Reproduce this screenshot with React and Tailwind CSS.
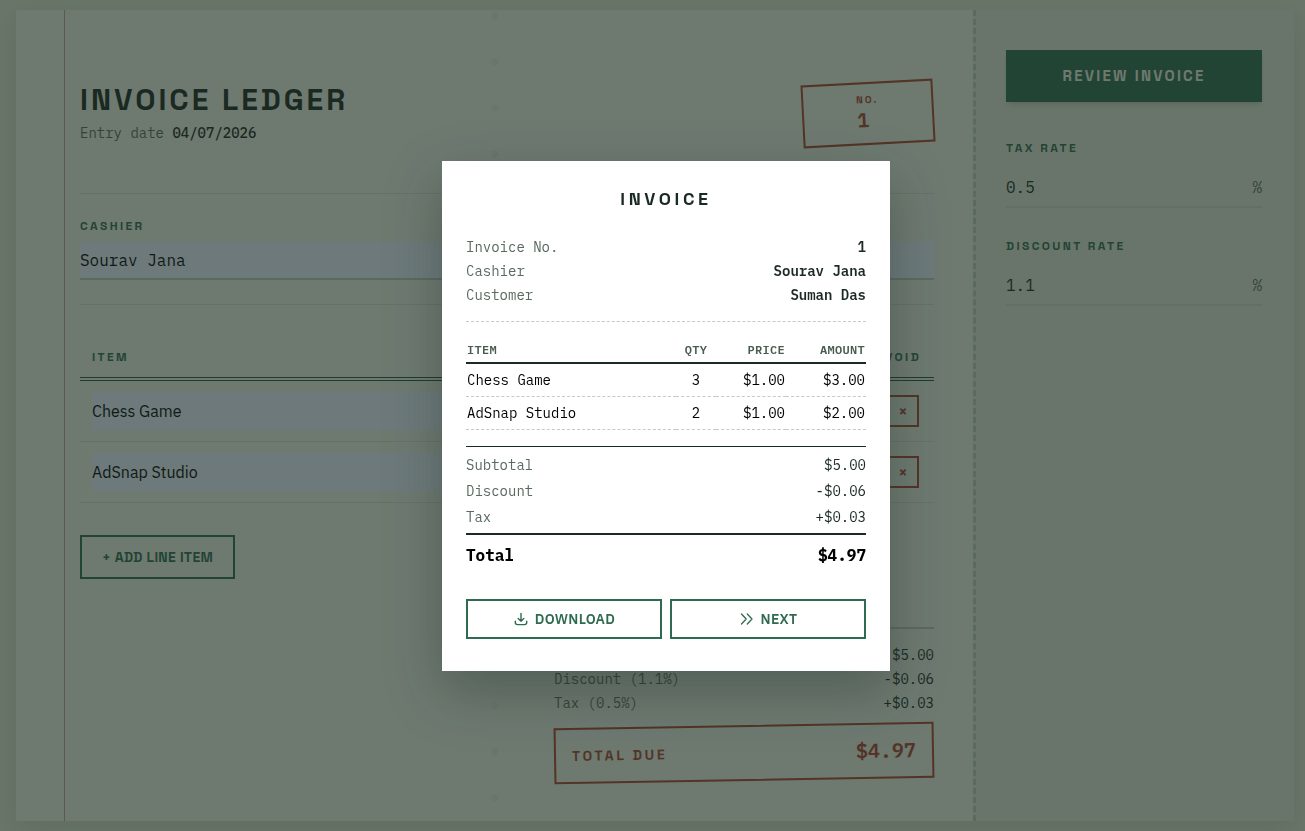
import { useState } from "react";

const MONO = "font-['IBM_Plex_Mono','Liberation_Mono',monospace]";
const HEAD = "font-['Space_Grotesk','Liberation_Sans',sans-serif]";

const ITEMS = [
  { id: 1, name: "Chess Game", qty: 3, price: 1 },
  { id: 2, name: "AdSnap Studio", qty: 2, price: 1 },
];

const money = (n) => `$${n.toFixed(2)}`;

function FieldLabel({ htmlFor, children }) {
  return (
    <label
      htmlFor={htmlFor}
      className="block font-['Space_Grotesk','Liberation_Sans',sans-serif] text-xs leading-4 font-semibold tracking-[0.2em] text-[#2f6b50] uppercase"
    >
      {children}
    </label>
  );
}

function PartyField({ id, label, defaultValue }) {
  return (
    <div>
      <FieldLabel htmlFor={id}>{label}</FieldLabel>
      <input
        id={id}
        defaultValue={defaultValue}
        className={`mt-2 block h-[38px] w-full border-b-2 border-[#bccabc] bg-[#e8f0fe] text-base text-black outline-none ${MONO}`}
      />
    </div>
  );
}

function RateField({ id, label, defaultValue }) {
  return (
    <div>
      <FieldLabel htmlFor={id}>{label}</FieldLabel>
      <div className={`mt-3 flex h-10 items-center border-b-2 border-[#ced7ca] text-base ${MONO}`}>
        <input
          id={id}
          defaultValue={defaultValue}
          className="w-full min-w-0 bg-transparent text-[#1b2a22] outline-none"
        />
        <span className="text-[#5a6a5f]">%</span>
      </div>
    </div>
  );
}

function Ledger() {
  const th =
    "border-b-4 border-double border-[#235541] pt-0 pb-3 text-xs leading-4 font-semibold tracking-[0.2em] text-[#2f6b50] uppercase";
  const td = "h-[61px] border-b border-[#d3ddd0] py-0";
  return (
    <main className="relative flex min-w-0 flex-1 bg-[#ebf1e7]">
      <div className="w-[49px] shrink-0 border-r border-[#c99d94]" />
      <div className="absolute inset-y-0 left-1/2 w-2 -translate-x-1/2 bg-[radial-gradient(circle_at_4px_6px,#e0e8db_3px,transparent_4px)] bg-[length:8px_46px]" />
      <div className="relative flex min-w-0 flex-1 flex-col pt-[69px] pr-[39px] pb-10 pl-[15px]">
        <header className="flex items-start justify-between border-b border-[#d3ddd0] pb-12">
          <div>
            <h1 className={`text-[30px] leading-[42px] font-bold tracking-[0.1em] text-[#1b2a22] ${HEAD}`}>
              INVOICE LEDGER
            </h1>
            <p className={`text-sm leading-6 text-[#5a6a5f] ${MONO}`}>
              Entry date <span className="font-medium text-[#1b2a22]">04/07/2026</span>
            </p>
          </div>
          <div className="mt-[3px] flex h-[63px] w-[132px] -rotate-3 items-center justify-center border-2 border-[#a8442f] pb-1 text-[#a8442f]">
            <div className="flex flex-col">
              <span className={`text-[10px] leading-4 font-semibold tracking-[0.2em] ${HEAD}`}>NO.</span>
              <span className={`text-xl leading-6 font-semibold ${MONO}`}>1</span>
            </div>
          </div>
        </header>

        <section className="grid grid-cols-2 gap-8 border-b border-[#d3ddd0] pt-6 pb-6">
          <PartyField id="cashier" label="Cashier" defaultValue="Sourav Jana" />
          <PartyField id="customer" label="Customer" defaultValue="Suman Das" />
        </section>

        <table className="mt-11 w-full table-fixed border-separate border-spacing-0">
          <thead className={HEAD}>
            <tr>
              <th className={`px-3 text-left ${th}`}>Item</th>
              <th className={`w-20 px-3 text-left ${th}`}>Qty</th>
              <th className={`w-[284px] px-3 text-left ${th}`}>Price</th>
              <th className={`w-[62px] px-0 text-center ${th}`}>Void</th>
            </tr>
          </thead>
          <tbody>
            {ITEMS.map((item) => (
              <tr key={item.id}>
                <td className={`px-3 ${td}`}>
                  <input
                    aria-label="Item name"
                    defaultValue={item.name}
                    className="block h-[38px] w-full bg-[#e8f0fe] font-['IBM_Plex_Sans',Roboto,sans-serif] text-base text-black outline-none"
                  />
                </td>
                <td className={`px-3 ${td}`}>
                  <input aria-label="Quantity" defaultValue={item.qty} className={`w-full outline-none ${MONO}`} />
                </td>
                <td className={`px-3 ${td}`}>
                  <input aria-label="Price" defaultValue={item.price.toFixed(2)} className={`w-full outline-none ${MONO}`} />
                </td>
                <td className={`text-center ${td}`}>
                  <button
                    type="button"
                    aria-label="Void item"
                    className={`inline-flex size-8 items-center justify-center border-2 border-[#a8442f] align-middle text-sm font-bold text-[#a8442f] ${MONO}`}
                  >
                    ×
                  </button>
                </td>
              </tr>
            ))}
          </tbody>
        </table>

        <button
          type="button"
          className={`mt-8 h-11 self-start border-2 border-[#2f6b50] px-5 text-sm font-semibold tracking-[0.02em] text-[#2f6b50] ${HEAD}`}
        >
          + ADD LINE ITEM
        </button>

        <section className="mt-auto w-[380px] self-end border-t-2 border-[#bccabc] pt-[14px]">
          <dl className={`text-sm leading-6 ${MONO}`}>
            <div className="flex justify-between">
              <dt className="text-[#5a6a5f]">Subtotal</dt>
              <dd className="text-[#1b2a22]">$5.00</dd>
            </div>
            <div className="flex justify-between">
              <dt className="text-[#5a6a5f]">Discount (1.1%)</dt>
              <dd className="text-[#1b2a22]">-$0.06</dd>
            </div>
            <div className="flex justify-between">
              <dt className="text-[#5a6a5f]">Tax (0.5%)</dt>
              <dd className="text-[#1b2a22]">+$0.03</dd>
            </div>
          </dl>
          <div className="mt-2.5 flex h-14 -rotate-1 items-center justify-between border-2 border-[#a8442f] px-4 text-[#a8442f]">
            <span className={`text-sm font-semibold tracking-[0.2em] ${HEAD}`}>TOTAL DUE</span>
            <span className={`text-xl font-semibold ${MONO}`}>$4.97</span>
          </div>
        </section>
      </div>
    </main>
  );
}

function Sidebar() {
  return (
    <aside className="w-[321px] shrink-0 border-l-[3px] border-dashed border-[#bccabc] bg-[#dfe7d6] pt-10 pr-8 pl-[30px]">
      <button
        type="button"
        className={`h-13 w-full bg-[#2f6b50] text-[15px] font-bold tracking-[0.15em] text-[#ebf1e7] shadow-md ${HEAD}`}
      >
        REVIEW INVOICE
      </button>
      <div className="mt-[38px] flex flex-col gap-[30px]">
        <RateField id="tax" label="Tax rate" defaultValue="0.5" />
        <RateField id="discount" label="Discount rate" defaultValue="1.1" />
      </div>
    </aside>
  );
}

function MetaRow({ label, value }) {
  return (
    <div className="flex justify-between">
      <dt className="text-[#5a6a5f]">{label}</dt>
      <dd className="font-semibold text-[#1b2a22]">{value}</dd>
    </div>
  );
}

function TotalRow({ label, value }) {
  return (
    <div className="flex justify-between">
      <dt className="text-[#5a6a5f]">{label}</dt>
      <dd className="text-[#1b2a22]">{value}</dd>
    </div>
  );
}

function DownloadIcon() {
  return (
    <svg viewBox="0 0 16 16" className="size-4" fill="none" stroke="currentColor" strokeWidth="1.4" strokeLinecap="round" strokeLinejoin="round" aria-hidden="true">
      <path d="M8 2.500V10.200M5.200 7.500L8 10.200L10.800 7.500M2.300 10.200V11.500C2.300 12.900 3.100 13.600 4.500 13.600H11.500C12.900 13.600 13.700 12.900 13.700 11.500V10.200" />
    </svg>
  );
}

function NextIcon() {
  return (
    <svg viewBox="0 0 16 16" className="size-4" fill="none" stroke="currentColor" strokeWidth="1.3" strokeLinecap="round" strokeLinejoin="round" aria-hidden="true">
      <path d="M2.500 3L7.200 8L2.500 13M8.300 3L13 8L8.300 13" />
    </svg>
  );
}

function InvoiceDialog({ onNext }) {
  const action =
    "flex h-10 items-center justify-center gap-1.5 border-2 border-[#2f6b50] font-['IBM_Plex_Sans',Roboto,sans-serif] text-sm font-semibold tracking-[0.02em] text-[#2f6b50]";
  const th = "border-b-2 border-[#1b2a22] pt-0 pb-1 font-semibold tracking-wide";
  const td = "h-[33px] border-b border-dashed border-[#c3cbc4] py-0";
  return (
    <div className="fixed inset-0 flex items-center justify-center bg-[#1b2a22]/60 pl-[27px]">
      <div
        role="dialog"
        aria-modal="true"
        aria-labelledby="invoice-title"
        className={`w-full max-w-md bg-white px-6 pt-6 pb-8 text-sm shadow-[0_20px_50px_rgba(27,42,34,0.35)] ${MONO}`}
      >
        <h2 id="invoice-title" className={`text-center text-lg leading-7 font-bold tracking-[0.2em] text-[#1b2a22] ${HEAD}`}>
          INVOICE
        </h2>
        <dl className="mt-[22px] border-b border-dashed border-[#c3cbc4] pb-[14px] leading-6">
          <MetaRow label="Invoice No." value="1" />
          <MetaRow label="Cashier" value="Sourav Jana" />
          <MetaRow label="Customer" value="Suman Das" />
        </dl>
        <table className="mt-5 w-full table-fixed border-separate border-spacing-0">
          <thead className="text-xs leading-4 text-[#4a5b50]">
            <tr>
              <th className={`px-px text-left ${th}`}>ITEM</th>
              <th className={`w-10 px-0 text-center ${th}`}>QTY</th>
              <th className={`w-[70px] px-px text-right ${th}`}>PRICE</th>
              <th className={`w-20 px-px text-right ${th}`}>AMOUNT</th>
            </tr>
          </thead>
          <tbody className="text-black">
            {ITEMS.map((item) => (
              <tr key={item.id}>
                <td className={`px-px ${td}`}>{item.name}</td>
                <td className={`px-0 text-center ${td}`}>{item.qty}</td>
                <td className={`px-px text-right ${td}`}>{money(item.price)}</td>
                <td className={`px-px text-right ${td}`}>{money(item.price * item.qty)}</td>
              </tr>
            ))}
          </tbody>
        </table>
        <dl className="mt-4 border-t border-[#1b2a22] pt-[5px] leading-[26px]">
          <TotalRow label="Subtotal" value="$5.00" />
          <TotalRow label="Discount" value="-$0.06" />
          <TotalRow label="Tax" value="+$0.03" />
          <div className="mt-[3px] flex justify-between border-t-2 border-[#1b2a22] pt-2 text-base leading-6 font-bold text-black">
            <dt>Total</dt>
            <dd>$4.97</dd>
          </div>
        </dl>
        <div className="mt-8 grid grid-cols-2 gap-2">
          <button type="button" className={action}>
            <DownloadIcon />
            DOWNLOAD
          </button>
          <button type="button" className={action} onClick={onNext}>
            <NextIcon />
            NEXT
          </button>
        </div>
      </div>
    </div>
  );
}

export default function App() {
  const [open, setOpen] = useState(true);
  return (
    <div className="min-h-screen bg-[#dfe7d6] px-4 pt-2.5 pr-[11px] pb-2.5">
      <div className="flex min-h-[calc(100vh-20px)] shadow-[0_8px_24px_rgba(27,42,34,0.12)]">
        <Ledger />
        <Sidebar />
      </div>
      {open && <InvoiceDialog onNext={() => setOpen(false)} />}
    </div>
  );
}
